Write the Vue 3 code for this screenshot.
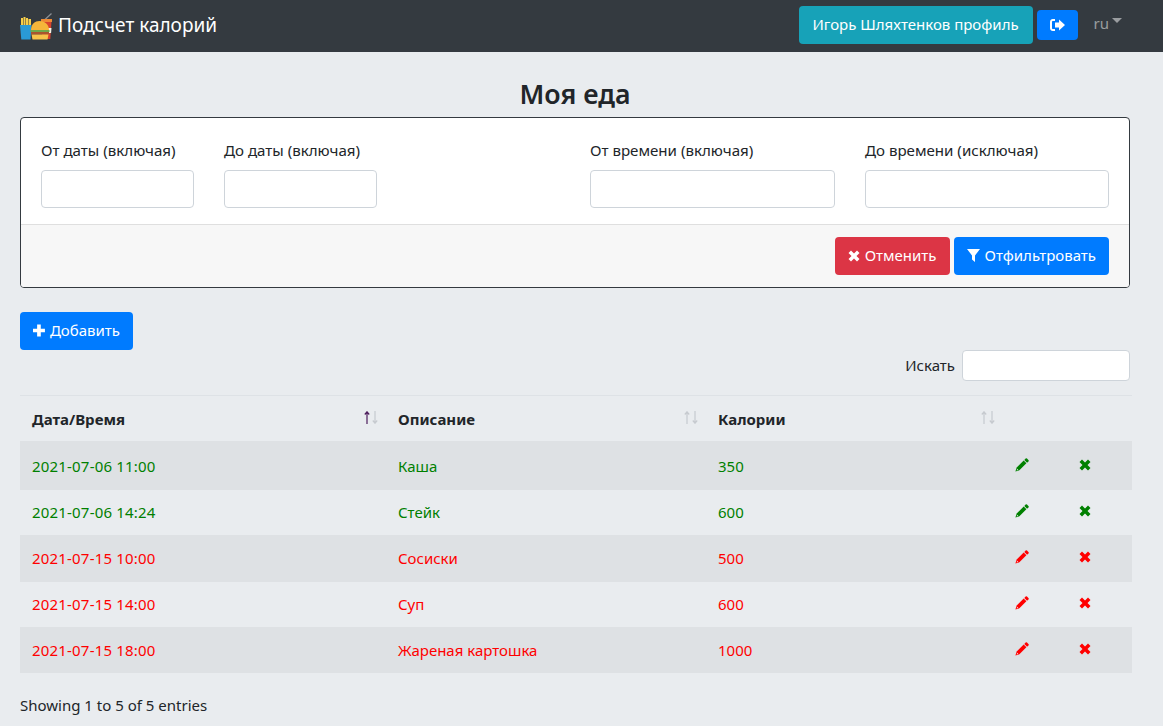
<template>
  <div class="page">
    <nav class="navbar">
      <a class="brand">
        <svg class="logo" width="32" height="27" viewBox="0 0 32 27">
          <path d="M25 6.500 31.500.5" stroke="#8d9196" stroke-width="1.200" fill="none" />
          <path d="M21.500 8h10l-1.200 18h-8z" fill="#d8432e" />
          <path d="M21 6h11v3H21z" fill="#ee8a35" />
          <path d="M27 15h4.500l-.4 5H27z" fill="#f4f1e4" />
          <path d="M1 5h2v7H1zM3.500 4h2v8h-2zM6 5h2v7H6zM8.500 6H11v6H8.500z" fill="#f7cf4a" />
          <path d="M0 12h11.500l-1 14.500H1.300z" fill="#2a9ad6" />
          <path d="M11 17c0-6 4-9 8.500-9S29 11 29 17z" fill="#f5b53a" />
          <path d="M10.500 17H29.500v2H10.500z" fill="#6fa84a" />
          <path d="M11 19h18v2.500H11z" fill="#a8552e" />
          <path d="M11.500 21.500h17l-1 5h-15z" fill="#f7c24a" />
        </svg>
        <span class="brand-text">Подсчет калорий</span>
      </a>
      <div class="nav-right">
        <button class="btn btn-info">Игорь Шляхтенков профиль</button>
        <button class="btn btn-primary btn-logout">
          <svg width="15" height="12" viewBox="0 0 15 12">
            <path d="M5 1H2.800A1.800 1.800 0 0 0 1 2.800v6.400A1.800 1.800 0 0 0 2.800 11H5" stroke="#fff" stroke-width="2" fill="none" />
            <path d="M9 .5 15 6l-6 5.500V8.500H5v-5h4z" fill="#fff" />
          </svg>
        </button>
        <span class="lang">ru<i class="caret"></i></span>
      </div>
    </nav>

    <main class="content">
      <h3 class="title">Моя еда</h3>

      <section class="filter-card">
        <div class="filter-body">
          <div class="field">
            <label>От даты (включая)</label>
            <input type="text" />
          </div>
          <div class="field">
            <label>До даты (включая)</label>
            <input type="text" />
          </div>
          <div class="field f3">
            <label>От времени (включая)</label>
            <input type="text" />
          </div>
          <div class="field">
            <label>До времени (исключая)</label>
            <input type="text" />
          </div>
        </div>
        <div class="filter-footer">
          <button class="btn btn-danger">
            <svg width="12" height="12" viewBox="0 0 12 12"><path :d="crossPath" fill="#fff" /></svg>
            Отменить
          </button>
          <button class="btn btn-primary">
            <svg width="13" height="13" viewBox="0 0 13 13"><path d="M0 0h13L8 6.500V13L5 10.500v-4z" fill="#fff" /></svg>
            Отфильтровать
          </button>
        </div>
      </section>

      <button class="btn btn-primary add-btn">
        <svg width="13" height="13" viewBox="0 0 13 13"><path d="M4.500 0h4v4.500H13v4H8.500V13h-4V8.500H0v-4h4.500z" fill="#fff" /></svg>
        Добавить
      </button>

      <div class="search-row">
        <label>Искать</label>
        <input type="text" />
      </div>

      <div class="table">
        <div class="row head">
          <div v-for="(col, i) in columns" :key="col" class="cell">
            {{ col }}
            <svg class="sort" width="14" height="13" viewBox="0 0 14 13" fill="none" stroke-width="1.200">
              <path :stroke="i === 0 ? '#4d1d5c' : '#c6cacf'" d="M3 13V1M.8 3.500 3 .8l2.200 2.700" />
              <path stroke="#c6cacf" d="M11 0v12M8.800 9.500 11 12.200l2.200-2.700" />
            </svg>
          </div>
          <div class="cell"></div>
          <div class="cell"></div>
        </div>
        <div
          v-for="(meal, i) in meals"
          :key="i"
          class="row"
          :class="[meal.excess ? 'excess' : 'normal', { odd: i % 2 === 0 }]"
          :style="{ height: meal.h + 'px', paddingTop: meal.pt + 'px' }"
        >
          <div class="cell date">{{ meal.date }}</div>
          <div class="cell">{{ meal.name }}</div>
          <div class="cell">{{ meal.cal }}</div>
          <div class="cell action">
            <svg class="pencil" width="14" height="14" viewBox="0 0 14 14">
              <path d="M10.600.6a1 1 0 0 1 1.400 0l1.400 1.400a1 1 0 0 1 0 1.400l-1.300 1.300-2.800-2.800z" fill="currentColor" />
              <path d="M8.700 2.600 11.400 5.300 4.400 12.300.4 13.600 1.700 9.600z" fill="currentColor" />
              <path d="M2.100 10.700 3.300 11.900 1.700 12.400z" fill="#f2f2f2" />
            </svg>
          </div>
          <div class="cell action">
            <svg class="cross" width="12" height="12" viewBox="0 0 12 12"><path :d="crossPath" fill="currentColor" /></svg>
          </div>
        </div>
      </div>

      <div class="info">Showing 1 to 5 of 5 entries</div>
    </main>
  </div>
</template>

<script setup>
const crossPath = 'M3 .5 6 3.500 9 .5 11.500 3l-3 3 3 3L9 11.500l-3-3-3 3L.5 9l3-3-3-3z'

const columns = ['Дата/Время', 'Описание', 'Калории']

// row heights in the table are not uniform, h and pt keep the text on a 46px step
const meals = [
  { date: '2021-07-06 11:00', name: 'Каша', cal: 350, excess: false, h: 49, pt: 13 },
  { date: '2021-07-06 14:24', name: 'Стейк', cal: 600, excess: false, h: 45, pt: 10 },
  { date: '2021-07-15 10:00', name: 'Сосиски', cal: 500, excess: true, h: 47, pt: 11 },
  { date: '2021-07-15 14:00', name: 'Суп', cal: 600, excess: true, h: 45, pt: 10 },
  { date: '2021-07-15 18:00', name: 'Жареная картошка', cal: 1000, excess: true, h: 46, pt: 11 }
]
</script>

<style>
html, body {
  margin: 0;
  background: #e9ecef;
}
</style>

<style scoped>
.page {
  font-family: "Noto Sans", "Open Sans", sans-serif;
  font-size: 15px;
  color: #212529;
  height: 726px;
  overflow: hidden;
}
.navbar {
  height: 52px;
  box-sizing: border-box;
  background: #343a40;
  display: flex;
  align-items: center;
  justify-content: space-between;
  padding: 0 20px;
}
.brand {
  display: flex;
  align-items: center;
  gap: 6px;
  color: #fff;
  font-size: 19px;
}
.brand-text {
  margin-bottom: 3px;
}
.nav-right {
  display: flex;
  align-items: center;
  margin-bottom: 2px;
}
.btn {
  height: 38px;
  box-sizing: border-box;
  border: 0;
  border-radius: 4px;
  padding: 0 13px 2px;
  font: inherit;
  color: #fff;
  display: inline-flex;
  align-items: center;
  justify-content: center;
  gap: 5px;
}
.btn svg {
  margin-top: 1px;
}
.btn-info { background: #17a2b8; width: 234px; }
.btn-primary { background: #007bff; }
.btn-danger { background: #dc3545; }
.btn-logout {
  width: 41px;
  height: 30px;
  margin-left: 4px;
}
.lang {
  color: rgba(255,255,255,.5);
  margin-left: 16px;
  margin-right: 21px;
  margin-bottom: 5px;
  display: flex;
  align-items: center;
}
.caret {
  width: 0;
  height: 0;
  border-top: 5px solid rgba(255,255,255,.5);
  border-left: 5px solid transparent;
  border-right: 5px solid transparent;
  margin-left: 3px;
  margin-bottom: 4px;
}
.content {
  padding: 0 20px;
}
.title {
  width: 1110px;
  margin: 23px 0 3px;
  text-align: center;
  font-size: 26.700px;
  font-weight: 600;
  line-height: 38px;
  height: 39px;
}
.filter-card {
  width: 1110px;
  box-sizing: border-box;
  border: 1px solid #343a40;
  border-radius: 4px;
  background: #fff;
  overflow: hidden;
}
.filter-body {
  display: grid;
  grid-template-columns: 153px 153px 1fr 244px;
  column-gap: 30px;
  padding: 20px 20px 16px;
  height: 106px;
  box-sizing: border-box;
}
.f3 {
  margin-left: 183px;
}
.field label {
  display: block;
  line-height: 24px;
  margin-bottom: 8px;
  white-space: nowrap;
  font-size: 15.100px;
}
.field input {
  display: block;
  width: 100%;
  height: 38px;
  box-sizing: border-box;
  border: 1px solid #ced4da;
  border-radius: 4px;
  background: #fff;
}
.filter-footer {
  background: #f7f7f7;
  border-top: 1px solid #dfdfdf;
  height: 63px;
  box-sizing: border-box;
  display: flex;
  justify-content: flex-end;
  align-items: center;
  gap: 4px;
  padding: 0 20px;
}
.add-btn {
  margin-top: 24px;
  display: flex;
  width: 113px;
}
.search-row {
  width: 1110px;
  display: flex;
  justify-content: flex-end;
  align-items: center;
  gap: 7px;
  height: 31px;
}
.search-row label {
  margin-bottom: 2px;
}
.search-row input {
  width: 168px;
  height: 31px;
  box-sizing: border-box;
  border: 1px solid #ced4da;
  border-radius: 4px;
  background: #fff;
}
.table {
  margin-top: 14px;
  width: 1112px;
  border-top: 1px solid #dee2e6;
}
.row {
  display: grid;
  grid-template-columns: 366px 320px 297px 64px 65px;
  box-sizing: border-box;
  align-items: start;
  line-height: 24px;
}
.row.head {
  height: 45px;
  padding-top: 11px;
  font-weight: 700;
}
.cell {
  padding-left: 12px;
  position: relative;
  white-space: nowrap;
}
.date { letter-spacing: .19px; }
.action { display: flex; }
.pencil { margin-top: 4px; }
.cross { margin-top: 5px; }
.normal { color: green; }
.excess { color: red; }
.odd { background: #dee1e4; }
.sort {
  position: absolute;
  right: 8px;
  top: 4px;
}
.info {
  margin-top: 20px;
  line-height: 24px;
}
</style>
